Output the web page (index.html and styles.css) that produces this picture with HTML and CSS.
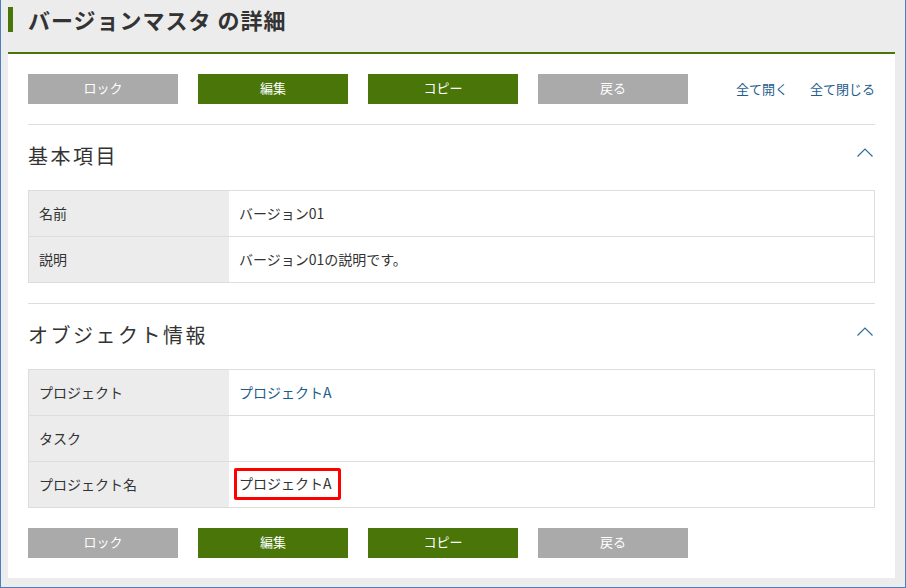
FILE: index.html
```html
<!DOCTYPE html>
<html lang="ja">
<head>
<meta charset="utf-8">
<title>バージョンマスタ の詳細</title>
<link rel="stylesheet" href="styles.css">
</head>
<body>
<div class="page">
  <header class="header">
    <h1 class="title">バージョンマスタ の詳細</h1>
  </header>
  <main class="panel">
    <div class="toolbar">
      <button class="btn btn-gray">ロック</button>
      <button class="btn btn-green">編集</button>
      <button class="btn btn-green">コピー</button>
      <button class="btn btn-gray">戻る</button>
      <div class="links">
        <a class="link" href="#">全て開く</a>
        <a class="link" href="#">全て閉じる</a>
      </div>
    </div>

    <section class="section">
      <div class="section-head">
        <h2 class="section-title">基本項目</h2>
        <svg class="chevron" width="16" height="9" viewBox="0 0 16 9"><polyline points="0.5,8.5 8,1 15.5,8.5" fill="none" stroke="#2b6e9e" stroke-width="1.2"/></svg>
      </div>
      <div class="kv">
        <div class="kv-row"><div class="kv-label">名前</div><div class="kv-value">バージョン01</div></div>
        <div class="kv-row"><div class="kv-label">説明</div><div class="kv-value">バージョン01の説明です。</div></div>
      </div>
    </section>

    <section class="section">
      <div class="section-head">
        <h2 class="section-title">オブジェクト情報</h2>
        <svg class="chevron" width="16" height="9" viewBox="0 0 16 9"><polyline points="0.5,8.5 8,1 15.5,8.5" fill="none" stroke="#2b6e9e" stroke-width="1.2"/></svg>
      </div>
      <div class="kv">
        <div class="kv-row"><div class="kv-label">プロジェクト</div><div class="kv-value"><a class="link" href="#">プロジェクトA</a></div></div>
        <div class="kv-row"><div class="kv-label">タスク</div><div class="kv-value"></div></div>
        <div class="kv-row"><div class="kv-label">プロジェクト名</div><div class="kv-value"><span class="highlight">プロジェクトA</span></div></div>
      </div>
    </section>

    <div class="toolbar toolbar-bottom">
      <button class="btn btn-gray">ロック</button>
      <button class="btn btn-green">編集</button>
      <button class="btn btn-green">コピー</button>
      <button class="btn btn-gray">戻る</button>
    </div>
  </main>
</div>
</body>
</html>
```
FILE: styles.css
```css
* { box-sizing: border-box; }
html, body { margin: 0; padding: 0; }
body {
  height: 588px;
  background: #ececec;
  border: 1px solid #4a7fc1;
  border-top: none;
  font-family: "Noto Sans CJK JP", "Noto Sans", sans-serif;
  color: #333;
  overflow: hidden;
}
.page {
  padding: 0 10px 0 7px;
}
.header {
  height: 54px;
  border-bottom: 2px solid #4a7508;
  padding-top: 7px;
}
.title {
  margin: 0;
  height: 25px;
  border-left: 5px solid #4a7508;
  padding-left: 15px;
  font-size: 22px;
  line-height: 24px;
  font-weight: bold;
  letter-spacing: 1px;
  color: #333;
}
.panel {
  background: #fff;
  padding: 20px;
}
.toolbar {
  display: flex;
  align-items: center;
  gap: 20px;
  margin-bottom: 20px;
}
.toolbar-bottom {
  margin: 20px 0 0;
}
.btn {
  width: 150px;
  height: 30px;
  border: none;
  padding: 0 0 2px;
  color: #fff;
  font-family: inherit;
  font-size: 13px;
  line-height: 28px;
  cursor: pointer;
}
.btn-gray { background: #aaaaaa; }
.btn-green { background: #4a7508; }
.links {
  margin-left: auto;
  display: flex;
  gap: 22px;
  font-size: 13px;
  margin-top: -2px;
}
.link {
  color: #1d5d8c;
  text-decoration: none;
}
.section {
  border-top: 1px solid #dddddd;
}
.section + .section {
  margin-top: 20px;
}
.section-head {
  height: 65px;
  display: flex;
  align-items: center;
  justify-content: space-between;
  padding-bottom: 4px;
}
.section-title {
  margin: 0;
  font-size: 20px;
  font-weight: normal;
  letter-spacing: 2.5px;
  line-height: 26px;
  color: #333;
}
.chevron {
  margin-right: 2px;
  margin-bottom: 6px;
}
.kv {
  border: 1px solid #dddddd;
  font-size: 14px;
}
.kv-row {
  display: flex;
  height: 45px;
}
.kv-row + .kv-row {
  height: 46px;
  border-top: 1px solid #dddddd;
}
.kv-label {
  width: 200px;
  flex: none;
  background: #ececec;
  padding: 0 0 2px 10px;
  display: flex;
  align-items: center;
}
.kv-value {
  flex: 1;
  padding: 0 0 2px 10px;
  display: flex;
  align-items: center;
}
.highlight {
  display: inline-flex;
  align-items: center;
  height: 32px;
  margin: 0 0 0 -5px;
  padding: 0 6px 1px 2px;
  border: 3px solid #ff0000;
  border-radius: 2px;
}
```
